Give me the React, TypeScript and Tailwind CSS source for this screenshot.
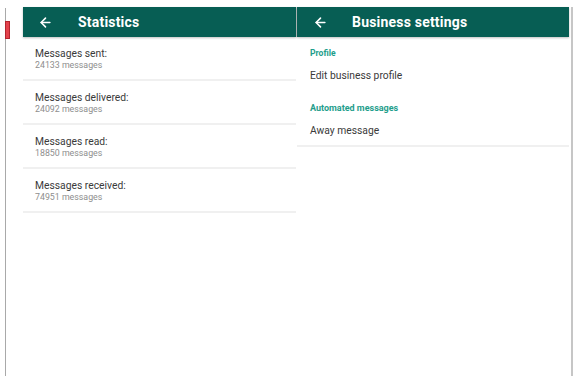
import { ArrowLeft } from "lucide-react";

const stats = [
  { label: "Messages sent:", value: "24133 messages" },
  { label: "Messages delivered:", value: "24092 messages" },
  { label: "Messages read:", value: "18850 messages" },
  { label: "Messages received:", value: "74951 messages" },
];

export default function App() {
  return (
    <div className="w-[577px] h-[376px] bg-white flex overflow-hidden" style={{ fontFamily: "Roboto, 'Liberation Sans', sans-serif" }}>
      {/* left gutter with scroll marker */}
      <div className="w-[23px] flex-shrink-0 relative">
        <div className="absolute left-[5px] top-[8px] bottom-0 w-px bg-[#a9a9a9]" />
        <div className="absolute left-[5px] top-[21px] w-[5px] h-[18px] bg-[#e4424c] border border-[#b3262f]" />
      </div>

      {/* Statistics */}
      <div className="w-[273px] flex-shrink-0 pt-[7px] flex flex-col">
        <div className="h-[30px] bg-[#075e54] flex items-center shadow-[0_1px_2px_rgba(0,0,0,0.25)] relative z-10 pl-[15px]">
          <ArrowLeft size={15} strokeWidth={2.5} className="text-white" />
          <span className="ml-[25px] text-white text-[14px] font-bold tracking-[0.2px]">Statistics</span>
        </div>
        {stats.map(s => (
          <div key={s.label} className="h-[44px] pt-[10px] pl-[12px] border-b-2 border-[#f0f0f0] flex flex-col">
            <span className="text-[10.3px] leading-[13px] text-[#3a3a3a]">{s.label}</span>
            <span className="text-[8.8px] leading-[11px] text-[#8e8e8e]">{s.value}</span>
          </div>
        ))}
      </div>

      <div className="w-px flex-shrink-0 pt-[7px]">
        <div className="h-[30px] bg-[#c9d3d1]" />
      </div>

      {/* Business settings */}
      <div className="w-[272px] flex-shrink-0 pt-[7px] flex flex-col">
        <div className="h-[30px] bg-[#075e54] flex items-center shadow-[0_1px_2px_rgba(0,0,0,0.25)] relative z-10 pl-[16px]">
          <ArrowLeft size={15} strokeWidth={2.5} className="text-white" />
          <span className="ml-[24px] text-white text-[14px] font-bold tracking-[0.2px]">Business settings</span>
        </div>
        <div className="pl-[13px] pt-[11px] text-[8.6px] leading-[10px] font-bold text-[#1f9e8c]">Profile</div>
        <div className="pl-[13px] pt-[11px] pb-[21px] text-[10.3px] leading-[13px] text-[#3a3a3a]">Edit business profile</div>
        <div className="pl-[13px] text-[9px] leading-[10px] font-bold text-[#1f9e8c]">Automated messages</div>
        <div className="pl-[13px] pt-[11px] pb-[8px] text-[10.3px] leading-[13px] text-[#3a3a3a] border-b-2 border-[#f0f0f0]">Away message</div>
      </div>

      {/* right edge */}
      <div className="ml-[2px] pt-[7px] flex-shrink-0">
        <div className="w-[2px] h-full bg-[#c6c6c6]" />
      </div>
    </div>
  );
}
